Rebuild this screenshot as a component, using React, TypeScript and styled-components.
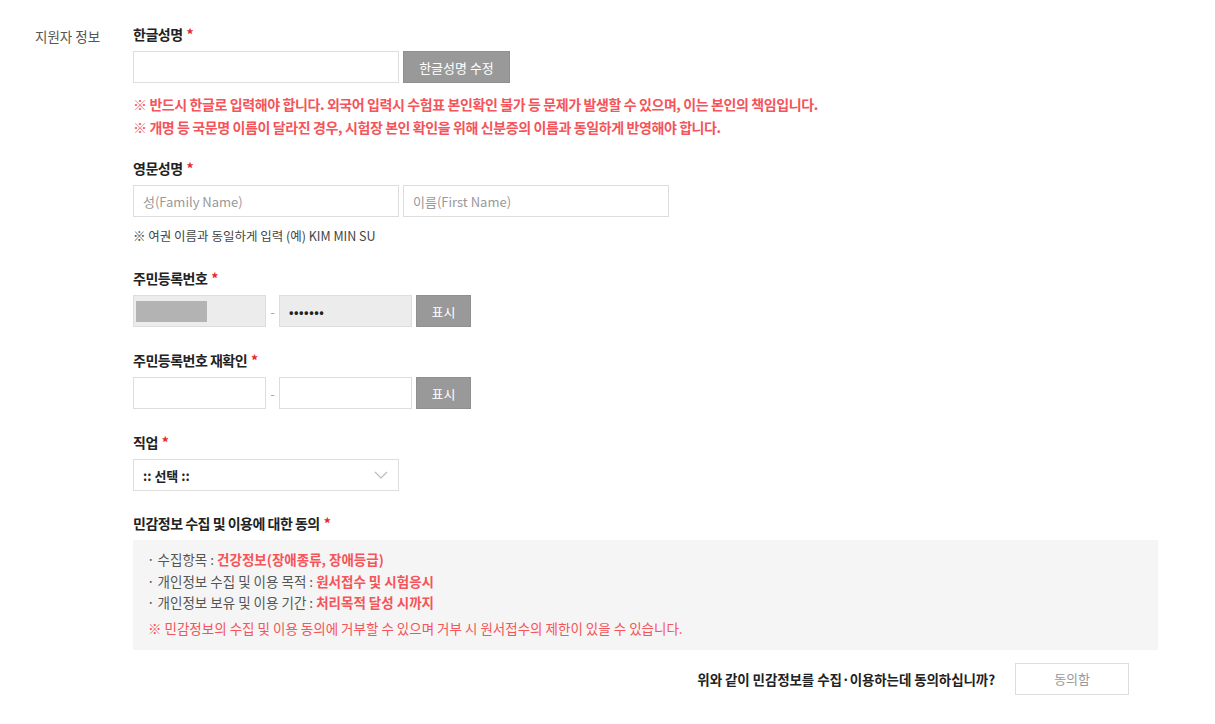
import React from 'react';
import styled, { createGlobalStyle } from 'styled-components';

const GlobalStyle = createGlobalStyle`
  html, body {
    margin: 0;
    padding: 0;
    background: #fff;
    font-family: 'Noto Sans CJK KR', 'Noto Sans', sans-serif;
    color: #222;
  }
  * { box-sizing: border-box; }
`;

const Page = styled.div`
  display: grid;
  grid-template-columns: 98px 1025px;
  padding: 26px 0 0 35px;
`;

const SideTitle = styled.div`
  font-size: 13.5px;
  color: #555;
`;

const Content = styled.div`
  display: flex;
  flex-direction: column;
`;

const Field = styled.div<{ $gap?: number }>`
  display: flex;
  flex-direction: column;
  margin-bottom: ${p => p.$gap ?? 0}px;
`;

const Label = styled.div`
  font-size: 14px;
  font-weight: 700;
  color: #222;
  height: 17px;
  line-height: 17px;
  margin-bottom: 8px;
  letter-spacing: -0.5px;

  span {
    color: #e8252b;
    margin-left: 4px;
  }
`;

const Row = styled.div`
  display: flex;
  align-items: center;
  gap: 4px;
`;

const Input = styled.div<{ $w: number; $filled?: boolean }>`
  width: ${p => p.$w}px;
  height: 32px;
  border: 1px solid #dddddd;
  background: ${p => (p.$filled ? '#ececec' : '#fff')};
  display: flex;
  align-items: center;
  padding: 0 9px;
  font-size: 13px;
  color: #999;
`;

const Mask = styled.div`
  width: 71px;
  height: 21px;
  background: #b3b3b3;
  margin-left: -7px;
`;

const Dots = styled.span`
  color: #222;
  font-size: 12px;
  letter-spacing: 0.5px;
  font-weight: 700;
`;

const Dash = styled.span`
  width: 13px;
  margin: 0 -4px;
  text-align: center;
  font-size: 12px;
  color: #999;
`;

const GrayButton = styled.div<{ $w: number }>`
  width: ${p => p.$w}px;
  height: 32px;
  background: #999999;
  border: 1px solid #8f8f8f;
  color: #fff;
  font-size: 13px;
  display: flex;
  align-items: center;
  justify-content: center;
`;

const Warn = styled.div`
  margin-top: 10px;
  font-size: 14px;
  font-weight: 700;
  color: #f4545a;
  line-height: 23px;
  letter-spacing: -0.4px;
`;

const Hint = styled.div`
  margin-top: 10px;
  font-size: 12.5px;
  color: #444;
  line-height: 18px;
`;

const Select = styled.div`
  width: 266px;
  height: 32px;
  border: 1px solid #dddddd;
  display: flex;
  align-items: center;
  justify-content: space-between;
  padding: 0 10px 0 9px;
  font-size: 13px;
  font-weight: 700;
  color: #222;
`;

const AgreeBox = styled.div`
  background: #f5f5f5;
  width: 1025px;
  padding: 9px 14px 12px;
  font-size: 13.5px;
  color: #555;
`;

const Item = styled.div`
  line-height: 21.5px;

  b {
    color: #f4545a;
    font-weight: 700;
  }
`;

const AgreeNote = styled.div`
  margin-top: 4px;
  padding-left: 1px;
  color: #f4545a;
  line-height: 20px;
`;

const Confirm = styled.div`
  display: flex;
  justify-content: flex-end;
  align-items: center;
  gap: 20px;
  margin-top: 13px;
  padding-right: 29px;
  font-size: 13.5px;
  font-weight: 700;
  color: #222;
  letter-spacing: -0.1px;
`;

const AgreeButton = styled.div`
  width: 114px;
  height: 32px;
  border: 1px solid #dddddd;
  background: #fff;
  color: #999;
  font-size: 13px;
  font-weight: 400;
  display: flex;
  align-items: center;
  justify-content: center;
`;

const Req = () => <span>*</span>;

const Chevron = () => (
  <svg width="14" height="8" viewBox="0 0 14 8" fill="none">
    <path d="M1 1l6 6 6-6" stroke="#bbb" strokeWidth="1.2" />
  </svg>
);

export default function App() {
  return (
    <>
      <GlobalStyle />
      <Page>
        <SideTitle>지원자 정보</SideTitle>
        <Content>
          <Field $gap={21}>
            <Label>한글성명<Req /></Label>
            <Row>
              <Input $w={266} />
              <GrayButton $w={107}>한글성명 수정</GrayButton>
            </Row>
            <Warn>
              ※ 반드시 한글로 입력해야 합니다. 외국어 입력시 수험표 본인확인 불가 등 문제가 발생할 수 있으며, 이는 본인의 책임입니다.
              <br />
              ※ 개명 등 국문명 이름이 달라진 경우, 시험장 본인 확인을 위해 신분증의 이름과 동일하게 반영해야 합니다.
            </Warn>
          </Field>

          <Field $gap={25}>
            <Label>영문성명<Req /></Label>
            <Row>
              <Input $w={266}>성(Family Name)</Input>
              <Input $w={266}>이름(First Name)</Input>
            </Row>
            <Hint>※ 여권 이름과 동일하게 입력 (예) KIM MIN SU</Hint>
          </Field>

          <Field $gap={25}>
            <Label>주민등록번호<Req /></Label>
            <Row>
              <Input $w={133} $filled><Mask /></Input>
              <Dash>-</Dash>
              <Input $w={133} $filled><Dots>•••••••</Dots></Input>
              <GrayButton $w={55}>표시</GrayButton>
            </Row>
          </Field>

          <Field $gap={25}>
            <Label>주민등록번호 재확인<Req /></Label>
            <Row>
              <Input $w={133} />
              <Dash>-</Dash>
              <Input $w={133} />
              <GrayButton $w={55}>표시</GrayButton>
            </Row>
          </Field>

          <Field $gap={24}>
            <Label>직업<Req /></Label>
            <Select>
              :: 선택 ::
              <Chevron />
            </Select>
          </Field>

          <Field>
            <Label>민감정보 수집 및 이용에 대한 동의<Req /></Label>
            <AgreeBox>
              <Item>· 수집항목 : <b>건강정보(장애종류, 장애등급)</b></Item>
              <Item>· 개인정보 수집 및 이용 목적 : <b>원서접수 및 시험응시</b></Item>
              <Item>· 개인정보 보유 및 이용 기간 : <b>처리목적 달성 시까지</b></Item>
              <AgreeNote>※ 민감정보의 수집 및 이용 동의에 거부할 수 있으며 거부 시 원서접수의 제한이 있을 수 있습니다.</AgreeNote>
            </AgreeBox>
            <Confirm>
              위와 같이 민감정보를 수집·이용하는데 동의하십니까?
              <AgreeButton>동의함</AgreeButton>
            </Confirm>
          </Field>
        </Content>
      </Page>
    </>
  );
}
